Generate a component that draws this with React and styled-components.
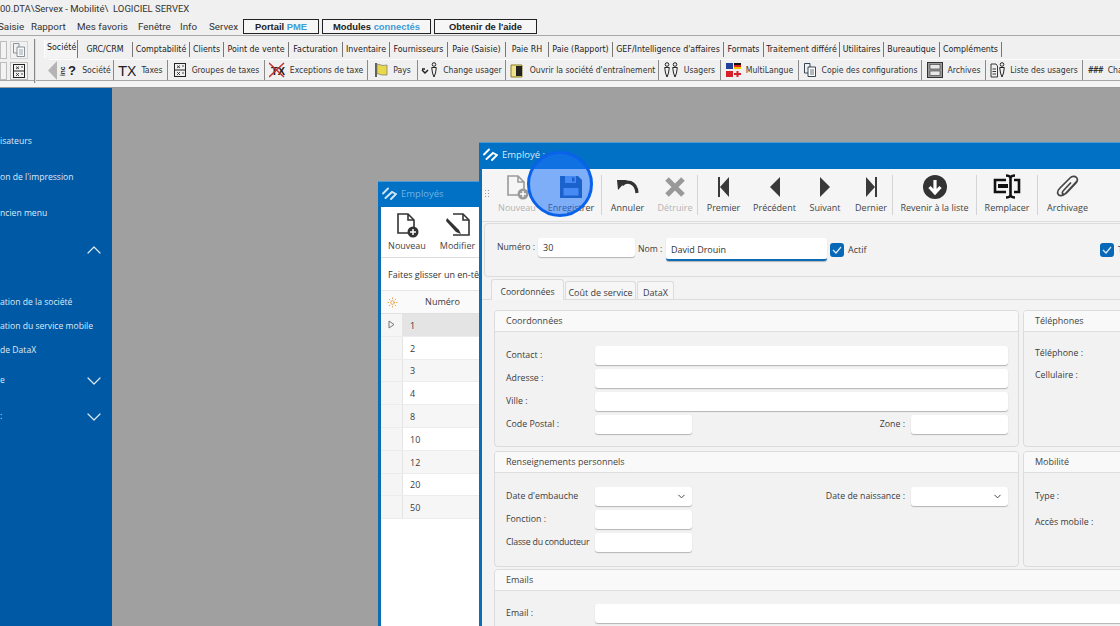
import React from "react";
import styled, { createGlobalStyle } from "styled-components";
import { ChevronUp, ChevronDown, Sun } from "lucide-react";

const GlobalStyle = createGlobalStyle`
  html, body { margin: 0; padding: 0; overflow: hidden; }
  * { box-sizing: border-box; }
`;

const legacy = `"DejaVu Sans Condensed", "Liberation Sans", sans-serif`;
const modern = `"Open Sans", "Noto Sans", sans-serif`;

const Page = styled.div`
  width: 1120px;
  height: 626px;
  overflow: hidden;
  display: flex;
  flex-direction: column;
  background: #f0f0f0;
  font-family: ${legacy};
  color: #222;
`;

const TitleBar = styled.div`
  height: 19px;
  font: 9.5px/18px Roboto, sans-serif;
  color: #333;
  white-space: pre;
`;

const MenuBar = styled.div`
  height: 17px;
  flex: none;
  display: flex;
  align-items: flex-start;
  border-bottom: 1px solid #a8a8a8;
  font: 9.8px/15px Roboto, sans-serif;
  color: #333;
`;

const MenuItem = styled.span`
  flex: none;
  width: ${p => p.$w}px;
  margin-left: ${p => p.$ml || 0}px;
`;

const ModuleButton = styled.div`
  flex: none;
  width: ${p => p.$w}px;
  height: 15px;
  margin-right: 3px;
  border: 1px solid #222;
  background: #f6f6f6;
  text-align: center;
  font: bold 9.4px/13px "Liberation Sans", sans-serif;
  color: #222;
  span { color: #3f9bd6; }
`;

const ToolZone = styled.div`
  height: 52px;
  flex: none;
  display: flex;
  border-bottom: 1px solid #9a9a9a;
  box-shadow: inset 0 -6px 0 #f4f4f4, inset 0 -7px 0 #a6a6a6;
`;

const QuickTools = styled.div`
  width: 36px;
  height: 44px;
  margin-top: 3px;
  flex: none;
  border-right: 2px groove #ddd;
  display: grid;
  grid-template-columns: 7px 18px;
  grid-auto-rows: 18px;
  gap: 3px 3px;
  align-content: start;
  padding-top: 2px;
`;

const QuickButton = styled.div`
  border: 1px solid #bdbdbd;
  background: #f3f3f3;
  display: flex;
  align-items: center;
  justify-content: center;
  opacity: ${p => (p.$faded ? 0.55 : 1)};
`;

const ToolStack = styled.div`
  flex: 1;
  min-width: 0;
  padding: 4px 0 0 8px;
`;

const TabRow = styled.div`
  display: flex;
  height: 19px;
  font-size: 8.8px;
  line-height: 17px;
`;

const Tab = styled.div`
  flex: none;
  width: ${p => p.$w}px;
  text-align: center;
  white-space: nowrap;
  border-right: 1px solid #777;
  height: 15px;
  margin-top: 2px;
  line-height: 14px;
  ${p => p.$active && `
    height: 18px;
    margin-top: 0;
    line-height: 15px;
    background: #f4f4f4;
    border-left: 1px solid #fff;
    text-align: left;
    padding-left: 2px;
  `}
`;

const ActionRow = styled.div`
  display: flex;
  height: 22px;
  margin-left: 4px;
  align-items: stretch;
  border-top: 1px solid #fafafa;
  white-space: nowrap;
  font-size: 8.6px;
`;

const Handle = styled.div`
  flex: none;
  width: 9px;
  height: 19px;
  margin: 1px 0 0 0;
  background: #b4b4b4;
  clip-path: polygon(100% 0, 100% 100%, 0 50%);
`;

const ActionItem = styled.div`
  flex: none;
  width: ${p => p.$w}px;
  height: 20px;
  display: flex;
  align-items: center;
  justify-content: center;
  gap: 5px;
  border-right: 1px solid #8a8a8a;
  color: #333;
`;

const Desk = styled.div`
  flex: 1;
  min-height: 0;
  display: flex;
`;

const Sidebar = styled.nav`
  flex: none;
  width: 112px;
  padding-top: 35px;
  background: #0059a5;
  color: #dfeaf5;
  font: 500 8.6px/1 ${modern};
`;

const SideRow = styled.div`
  height: ${p => p.$h || 36}px;
  display: flex;
  align-items: center;
  justify-content: space-between;
  padding: 1px 6px 0 0;
  white-space: nowrap;
`;

const SideGap = styled.div`
  height: 23px;
`;

const Workspace = styled.main`
  flex: 1;
  position: relative;
  background: #a0a0a0;
`;

const Win = styled.section`
  position: absolute;
  left: ${p => p.$x}px;
  top: ${p => p.$y}px;
  width: ${p => p.$w}px;
  bottom: -4px;
  z-index: ${p => p.$z};
  display: flex;
  flex-direction: column;
  border-left: 3px solid #0c6cb4;
  background: #f3f3f3;
  font-family: ${modern};
  font-size: 9px;
  color: #3c3c3c;
`;

const WinTitle = styled.header`
  flex: none;
  height: ${p => p.$h}px;
  margin-left: -3px;
  padding: 0 0 3px 4px;
  display: flex;
  align-items: center;
  gap: 4px;
  background: #0071c5;
  color: ${p => (p.$dim ? "#6db3e6" : "#d6e9f8")};
  font-size: 9.5px;
  border-top: 1px solid #4f9ad4;
`;

const Bar = styled.div`
  flex: none;
  height: ${p => p.$h}px;
  display: flex;
  align-items: flex-start;
  border-bottom: 1px solid #dcdcdc;
  background: ${p => p.$bg || "#f5f5f5"};
`;

const Grip = styled.div`
  width: 5px;
  height: 10px;
  margin: 20px 4px 0 2px;
  flex: none;
  background-image: radial-gradient(#9a9a9a 1px, transparent 1px);
  background-size: 3px 3px;
`;

const BarBtn = styled.div`
  flex: none;
  width: ${p => p.$w}px;
  height: 100%;
  display: grid;
  grid-template-rows: 26px 13px;
  justify-items: center;
  align-items: center;
  row-gap: 1px;
  padding-top: 5px;
  color: ${p => (p.$off ? "#b4b4b4" : "#444")};
  white-space: nowrap;
  svg { display: block; }
  span { line-height: 13px; }
`;

const BarSep = styled.div`
  flex: none;
  width: 1px;
  height: 40px;
  margin-top: 6px;
  background: #d4d4d4;
`;

const HintRow = styled.div`
  height: 32px;
  flex: none;
  padding-left: 7px;
  line-height: 33px;
  color: #333;
  background: #fff;
  white-space: nowrap;
  overflow: hidden;
`;

const GridHeader = styled.div`
  height: 24px;
  flex: none;
  display: grid;
  grid-template-columns: 22px 1fr;
  align-items: center;
  background: #fafafa;
  border-top: 1px solid #e6e6e6;
  border-bottom: 1px solid #e0e0e0;
  div:last-child { padding: 0 6px 2px 0; text-align: center; }
`;

const GridArea = styled.div`
  flex: 1;
  background: #fff;
`;

const GridRow = styled.div`
  height: 22.8px;
  display: grid;
  grid-template-columns: 22px 1fr;
  align-items: center;
  background: ${p => (p.$selected ? "#e4e4e4" : p.$alt ? "#f6f6f6" : "#fff")};
  border-bottom: 1px solid #ececec;
`;

const RowMark = styled.div`
  height: 100%;
  background: #f5f5f5;
  border-right: 1px solid #e4e4e4;
  display: flex;
  align-items: center;
  justify-content: center;
`;

const RowValue = styled.div`
  padding: 1px 0 0 7px;
`;

const HeadPanel = styled.div`
  flex: none;
  height: 54px;
  margin: 1px 0 0 2px;
  padding: 14px 6px 0 12px;
  display: flex;
  align-items: flex-start;
  border: 1px solid #dcdcdc;
  border-radius: 4px;
`;

const HeadLabel = styled.label`
  flex: none;
  width: ${p => p.$w}px;
  margin-top: ${p => p.$top || 0}px;
  line-height: 18px;
  white-space: nowrap;
  font-size: 8.7px;
`;

const Input = styled.div`
  flex: none;
  height: ${p => p.$h || 19}px;
  width: ${p => (p.$w ? `${p.$w}px` : "auto")};
  margin-right: ${p => p.$mr || 0}px;
  padding: 0 5px;
  line-height: ${p => p.$h || 20}px;
  background: #fff;
  border-radius: 3px;
  box-shadow: 0 1px 1px #b4b4b4;
  color: #333;
  ${p => p.$focus && "border-bottom: 2px solid #0b6cb5;"}
  ${p => p.$wide && "grid-column: 2 / -1;"}
`;

const SelectBox = styled(Input)`
  display: flex;
  align-items: center;
  justify-content: flex-end;
  padding-right: 5px;
`;

const Check = styled.div`
  flex: none;
  width: 14px;
  height: 14px;
  margin: 5px 4px 0 3px;
  border-radius: 3px;
  background: #0868b8;
  display: flex;
  align-items: center;
  justify-content: center;
`;

const CheckLabel = styled.span`
  margin-top: 5px;
  line-height: 14px;
  white-space: nowrap;
`;

const Spacer = styled.div`
  flex: 1;
`;

const FormTabs = styled.div`
  flex: none;
  height: 21px;
  margin-top: 2px;
  padding-left: 9px;
  display: flex;
  align-items: flex-end;
  gap: 1px;
  border-bottom: 1px solid #dcdcdc;
`;

const FormTab = styled.div`
  flex: none;
  width: ${p => p.$w}px;
  height: ${p => (p.$active ? 21 : 18)}px;
  margin-bottom: ${p => (p.$active ? -1 : 0)}px;
  line-height: 16px;
  text-align: center;
  border: 1px solid #dcdcdc;
  border-bottom: none;
  border-radius: 3px 3px 0 0;
  background: #f6f6f6;
  padding-top: ${p => (p.$active ? 4 : 3)}px;
  font-size: ${p => (p.$active ? 8.6 : 9)}px;
`;

const Sections = styled.div`
  flex: none;
  margin: 10px 0 0 12px;
  display: grid;
  grid-template-columns: 525px 130px;
  grid-template-rows: 137px 116px;
  gap: 4px;
`;

const Section = styled.div`
  border: 1px solid #dcdcdc;
  border-radius: 4px;
  background: #f2f2f2;
  overflow: hidden;
  ${p => p.$span && `
    width: 660px;
    margin: 2px 0 0 12px;
    flex: none;
    height: 70px;
  `}
`;

const SectionHead = styled.div`
  height: 21px;
  padding-left: 11px;
  line-height: 19px;
  background: #f9f9f9;
  border-bottom: 1px solid #dedede;
  color: #444;
`;

const FieldGrid = styled.div`
  padding: ${p => p.$top}px 10px 0 11px;
  display: grid;
  grid-template-columns: 89px 97px 1fr 97px;
  grid-auto-rows: 19px;
  row-gap: ${p => p.$gap}px;
  align-items: center;
  font-size: 8.8px;
`;

const SideFields = styled.div`
  padding: ${p => p.$top}px 0 0 11px;
  display: flex;
  flex-direction: column;
  gap: ${p => p.$gap}px;
  line-height: 14px;
  font-size: 8.8px;
`;

const EndLabel = styled.label`
  text-align: right;
  padding: 0 6px 2px 0;
  white-space: nowrap;
`;

const Label = styled.label`
  white-space: nowrap;
  padding-bottom: 2px;
  letter-spacing: ${p => (p.$tight ? -0.25 : 0)}px;
`;

const Spot = styled.div`
  position: absolute;
  left: 415px;
  top: 63px;
  width: 66px;
  height: 66px;
  z-index: 5;
  border-radius: 50%;
  background: rgba(30, 115, 250, 0.55);
  border: 3px solid #0a62ea;
`;

const Logo = ({ dim }) => (
  <svg width="15" height="13" viewBox="0 0 15 13" fill="none" stroke={dim ? "#cfe6f7" : "#fff"} strokeWidth="1.9" strokeLinecap="round">
    <path d="M1 6.5 L6 1.5 M3.5 11 L10 5 L13 6.5 M9 12 L14 7" />
  </svg>
);

const DocPlus = ({ color }) => (
  <svg width="24" height="26" viewBox="0 0 24 26" fill="none">
    <path d="M3 2 H13 L19 8 V21 H3 Z M13 2 V8 H19" stroke={color} strokeWidth="1.6" />
    <circle cx="18" cy="20" r="5.5" fill={color} />
    <path d="M18 17 V23 M15 20 H21" stroke="#fff" strokeWidth="1.5" />
  </svg>
);

const DocEdit = () => (
  <svg width="26" height="26" viewBox="0 0 26 26" fill="none">
    <path d="M8 2 H18 L24 8 V23 H8" stroke="#333" strokeWidth="1.6" />
    <path d="M18 2 V8 H24" stroke="#333" strokeWidth="1.6" />
    <path d="M2 6 L14 18 L16 22 L11 20 L1 9 Z" fill="#333" />
  </svg>
);

const Floppy = () => (
  <svg width="24" height="24" viewBox="0 0 24 24">
    <path d="M1 1 H19 L23 5 V23 H1 Z" fill="#1c4f98" />
    <path d="M6 1 H17 V8 H6 Z" fill="#7aa6ec" />
    <path d="M13 2.5 H15.5 V6.5 H13 Z" fill="#1c4f98" />
    <path d="M4.5 13 H19.5 V20.5 H4.5 Z" fill="#7aa6ec" />
  </svg>
);

const Undo = () => (
  <svg width="24" height="24" viewBox="0 0 24 24" fill="none">
    <path d="M6 10 C10 5 20 6 21 18" stroke="#333" strokeWidth="3.2" />
    <path d="M1 5 L11 5 L2 15 Z" fill="#333" />
  </svg>
);

const Cross = () => (
  <svg width="24" height="24" viewBox="0 0 24 24" stroke="#999" strokeWidth="5">
    <path d="M4 4 L20 20 M20 4 L4 20" />
  </svg>
);

const Nav = ({ d, bar }) => (
  <svg width="24" height="24" viewBox="0 0 24 24" fill="#3a3a3a">
    <path d={d} />
    {bar && <rect x={bar} y="2" width="2" height="20" />}
  </svg>
);

const BackArrow = () => (
  <svg width="24" height="24" viewBox="0 0 24 24">
    <circle cx="12" cy="12" r="12" fill="#333" />
    <path d="M12 5 V17 M6.5 12 L12 18 L17.5 12" fill="none" stroke="#fff" strokeWidth="3.2" />
  </svg>
);

const Replace = () => (
  <svg width="28" height="26" viewBox="0 0 28 26" fill="none" stroke="#111">
    <path d="M13 6 H2 V18 H13" strokeWidth="2.6" />
    <path d="M21 6 H26 V18 H21" strokeWidth="2.6" />
    <rect x="5" y="10" width="10" height="4" fill="#111" stroke="none" />
    <path d="M13 1.5 C16 1.5 17 2.5 17.5 3.5 C18 2.5 19 1.5 22 1.5 M17.5 3 V21 M13 23.5 C16 23.5 17 22.5 17.5 21.5 C18 22.5 19 23.5 22 23.5" strokeWidth="2.6" />
  </svg>
);

const Clip = () => (
  <svg width="24" height="24" viewBox="0 0 24 24" fill="none" stroke="#444" strokeWidth="1.7">
    <path d="M21 6 L9.5 18.5 C7 21 3 21.5 2 19 C1 17 2.5 14.5 4 13 L14 3 C16 1 19 1 20.5 2.5 C22 4 21.5 6.5 20 8 L10.5 18 C9 19.5 7 19.5 6.5 18.5 C6 17.5 6.5 16.5 7.5 15.5 L15 7.5" />
  </svg>
);

const Small = ({ w = 16, children }) => (
  <svg width={w} height="16" viewBox={`0 0 ${w} 16`} fill="none" stroke="#222">{children}</svg>
);

const IconInc = () => (
  <Small w={18}>
    <text x="6" y="14" transform="rotate(-90 6 14)" fontSize="6.5" fill="#222" stroke="none" fontFamily="Liberation Sans" fontWeight="700">inc</text>
    <text x="9" y="13" fontSize="13" fill="#222" stroke="none" fontFamily="Liberation Sans" fontWeight="700">?</text>
  </Small>
);

const IconTx = () => (
  <Small w={18}>
    <text x="0" y="14" fontSize="15" fill="#222" stroke="none" fontFamily="Liberation Sans">T</text>
    <text x="9" y="14" fontSize="14" fill="#222" stroke="none" fontFamily="Liberation Sans">X</text>
  </Small>
);

const IconGroup = () => (
  <Small w={14}>
    <rect x="1.5" y="1.5" width="11" height="13" />
    <path d="M1.5 8 H12.5" />
    <path d="M4 3.5 L7 6 M7 3.5 L4 6 M4 10 L7 13 M7 10 L4 13 M9 4 H11 M9 11 H11" strokeWidth="0.8" />
  </Small>
);

const IconNoTax = () => (
  <Small w={16}>
    <text x="2" y="13" fontSize="11" fontWeight="700" fill="#222" stroke="none" fontFamily="Liberation Sans">TX</text>
    <path d="M0 1 L15 15 M15 1 L0 15" stroke="#c4302b" strokeWidth="1.5" />
  </Small>
);

const IconFlag = () => (
  <Small w={14}>
    <path d="M2 1 V15" stroke="#222" strokeWidth="1.4" />
    <path d="M3 2 L9 3.5 L13 3 V13 L8 13 L3 11.5 Z" fill="#e8d84a" stroke="#777" strokeWidth="0.7" />
  </Small>
);

const Person = ({ x = 0 }) => (
  <g transform={`translate(${x} 0)`}>
    <circle cx="3" cy="2.5" r="1.8" strokeWidth="1" />
    <path d="M0.7 5.5 H5.3 L4.5 11 L3 15 L1.5 11 Z" strokeWidth="1" />
  </g>
);

const IconSwap = () => (
  <Small w={17}>
    <path d="M1 8 L4 11 L7 8 M1 7 H4" strokeWidth="1.5" />
    <Person x={10} />
  </Small>
);

const IconBook = () => (
  <Small w={16}>
    <path d="M2 3 H13 V15 H2 Z" fill="#efe28a" stroke="#8a7d22" />
    <rect x="7" y="4" width="6" height="10" fill="#222" stroke="none" />
  </Small>
);

const IconUsers = () => (
  <Small w={15}>
    <Person x={0} />
    <Person x={8} />
  </Small>
);

const IconFlags = () => (
  <Small w={15}>
    <rect x="0" y="1" width="7" height="6" fill="#21409a" stroke="none" />
    <rect x="8" y="1" width="7" height="2" fill="#111" stroke="none" />
    <rect x="8" y="3" width="7" height="2" fill="#d22" stroke="none" />
    <rect x="8" y="5" width="7" height="2" fill="#f2c500" stroke="none" />
    <rect x="0" y="9" width="7" height="6" fill="#d6202a" stroke="none" />
    <path d="M8 12 H15 M11.5 9 V15" stroke="#d6202a" strokeWidth="2" />
  </Small>
);

const IconCopy = () => (
  <Small w={14}>
    <path d="M1.5 1.5 H7 V11 H1.5 Z" strokeWidth="0.9" stroke="#234" />
    <path d="M5 5 H12.5 V14.5 H5 Z" fill="#fff" stroke="#234" strokeWidth="0.9" />
    <path d="M7 8 H11 M7 10 H11 M7 12 H11" strokeWidth="0.7" stroke="#234" />
  </Small>
);

const IconBox = () => (
  <Small w={16}>
    <rect x="0.5" y="0.5" width="15" height="15" fill="#9b9b9b" stroke="#333" />
    <rect x="3" y="2.5" width="10" height="4.5" fill="#e8e8e8" stroke="#333" strokeWidth="0.6" />
    <rect x="3" y="9" width="10" height="4.5" fill="#e8e8e8" stroke="#333" strokeWidth="0.6" />
  </Small>
);

const IconList = () => (
  <Small w={15}>
    <path d="M1 2 H6 L7.5 4 V15 H1 Z M2.5 7 H6 M2.5 9.5 H6 M2.5 12 H6" strokeWidth="0.9" />
    <Person x={9} />
  </Small>
);

const Hash = styled.span`
  font-weight: 700;
  font-style: italic;
  font-size: 8px;
`;

const Tick = () => (
  <svg width="10" height="8" viewBox="0 0 10 8" fill="none" stroke="#dcecf8" strokeWidth="1.2">
    <path d="M1 4 L4 7 L9 1" />
  </svg>
);

const tabs = [
  ["GRC/CRM", 55], ["Comptabilité", 57], ["Clients", 34], ["Point de vente", 65], ["Facturation", 54],
  ["Inventaire", 47], ["Fournisseurs", 58], ["Paie (Saisie)", 58], ["Paie RH", 43], ["Paie (Rapport)", 64],
  ["GEF/Intelligence d'affaires", 111], ["Formats", 40], ["Traitement différé", 76], ["Utilitaires", 44],
  ["Bureautique", 56], ["Compléments", 62],
];

const actions = [
  [<IconInc key="i" />, "Société", 57],
  [<IconTx key="i" />, "Taxes", 54],
  [<IconGroup key="i" />, "Groupes de taxes", 97],
  [<IconNoTax key="i" />, "Exceptions de taxe", 103],
  [<IconFlag key="i" />, "Pays", 50],
  [<IconSwap key="i" />, "Change usager", 88],
  [<IconBook key="i" />, "Ouvrir la société d'entraînement", 153],
  [<IconUsers key="i" />, "Usagers", 62],
  [<IconFlags key="i" />, "MultiLangue", 78],
  [<IconCopy key="i" />, "Copie des configurations", 123],
  [<IconBox key="i" />, "Archives", 64],
  [<IconList key="i" />, "Liste des usagers", 97],
];

const rows = ["1", "2", "3", "4", "8", "10", "12", "20", "50"];

export default function App() {
  return (
    <Page>
      <GlobalStyle />
      <TitleBar>00.DTA\Servex - Mobilité\  LOGICIEL SERVEX</TitleBar>
      <MenuBar>
        <MenuItem $w={33} $ml={-2}>Saisie</MenuItem>
        <MenuItem $w={46}>Rapport</MenuItem>
        <MenuItem $w={61}>Mes favoris</MenuItem>
        <MenuItem $w={42}>Fenêtre</MenuItem>
        <MenuItem $w={29}>Info</MenuItem>
        <MenuItem $w={34}>Servex</MenuItem>
        <ModuleButton $w={76}>Portail <span>PME</span></ModuleButton>
        <ModuleButton $w={109}>Modules <span>connectés</span></ModuleButton>
        <ModuleButton $w={103}>Obtenir de l'aide</ModuleButton>
      </MenuBar>
      <ToolZone>
        <QuickTools>
          <QuickButton />
          <QuickButton $faded><IconCopy /></QuickButton>
          <QuickButton />
          <QuickButton><IconGroup /></QuickButton>
        </QuickTools>
        <ToolStack>
          <TabRow>
            <Tab $w={34} $active>Société</Tab>
            {tabs.map(([name, w]) => <Tab key={name} $w={w}>{name}</Tab>)}
          </TabRow>
          <ActionRow>
            <Handle />
            {actions.map(([icon, name, w]) => (
              <ActionItem key={name} $w={w}>{icon}{name}</ActionItem>
            ))}
            <ActionItem $w={60}><Hash>###</Hash>Change</ActionItem>
          </ActionRow>
        </ToolStack>
      </ToolZone>
      <Desk>
        <Sidebar>
          <SideRow>isateurs</SideRow>
          <SideRow>on de l'impression</SideRow>
          <SideRow>ncien menu</SideRow>
          <SideRow><span /><ChevronUp size={24} strokeWidth={1.2} /></SideRow>
          <SideGap />
          <SideRow $h={24}>ation de la société</SideRow>
          <SideRow $h={24}>ation du service mobile</SideRow>
          <SideRow $h={24}>de DataX</SideRow>
          <SideRow>e<ChevronDown size={24} strokeWidth={1.2} /></SideRow>
          <SideRow>:<ChevronDown size={24} strokeWidth={1.2} /></SideRow>
        </Sidebar>
        <Workspace>
          <Win $x={266} $y={93} $w={110} $z={1}>
            <WinTitle $h={26} $dim><Logo dim />Employés</WinTitle>
            <Bar $h={51} $bg="#fff">
              <BarBtn $w={52}><DocPlus color="#333" /><span>Nouveau</span></BarBtn>
              <BarBtn $w={49}><DocEdit /><span>Modifier</span></BarBtn>
            </Bar>
            <HintRow>Faites glisser un en-tête</HintRow>
            <GridHeader>
              <div><Sun size={11} color="#e2a24a" style={{ display: "block", margin: "0 auto" }} /></div>
              <div>Numéro</div>
            </GridHeader>
            <GridArea>
              {rows.map((value, i) => (
                <GridRow key={value} $selected={i === 0} $alt={i % 2 === 0}>
                  <RowMark>
                    {i === 0 && (
                      <svg width="7" height="9" viewBox="0 0 7 9" fill="none" stroke="#777"><path d="M1 1 L6 4.5 L1 8 Z" /></svg>
                    )}
                  </RowMark>
                  <RowValue>{value}</RowValue>
                </GridRow>
              ))}
            </GridArea>
          </Win>
          <Win $x={367} $y={54} $w={651} $z={2}>
            <WinTitle $h={27}><Logo />Employé :</WinTitle>
            <Bar $h={53}>
              <Grip />
              <BarBtn $w={48} $off><DocPlus color="#9a9a9a" /><span>Nouveau</span></BarBtn>
              <BarBtn $w={60}><Floppy /><span>Enregistrer</span></BarBtn>
              <BarSep />
              <BarBtn $w={51}><Undo /><span>Annuler</span></BarBtn>
              <BarBtn $w={44} $off><Cross /><span>Détruire</span></BarBtn>
              <BarSep />
              <BarBtn $w={51}><Nav d="M17 2 V22 L8 12 Z" bar="6" /><span>Premier</span></BarBtn>
              <BarBtn $w={51}><Nav d="M17 2 V22 L7 12 Z" /><span>Précédent</span></BarBtn>
              <BarBtn $w={50}><Nav d="M7 2 V22 L17 12 Z" /><span>Suivant</span></BarBtn>
              <BarBtn $w={42}><Nav d="M7 2 V22 L16 12 Z" bar="16" /><span>Dernier</span></BarBtn>
              <BarSep />
              <BarBtn $w={83}><BackArrow /><span>Revenir à la liste</span></BarBtn>
              <BarSep />
              <BarBtn $w={60}><Replace /><span>Remplacer</span></BarBtn>
              <BarSep />
              <BarBtn $w={59}><Clip /><span>Archivage</span></BarBtn>
            </Bar>
            <HeadPanel>
              <HeadLabel $w={41}>Numéro :</HeadLabel>
              <Input $w={97} $mr={3}>30</Input>
              <HeadLabel $w={28} $top={2}>Nom :</HeadLabel>
              <Input $w={161} $h={23} $focus>David Drouin</Input>
              <Check><Tick /></Check>
              <CheckLabel>Actif</CheckLabel>
              <Spacer />
              <Check><Tick /></Check>
              <CheckLabel>T</CheckLabel>
            </HeadPanel>
            <FormTabs>
              <FormTab $w={73} $active>Coordonnées</FormTab>
              <FormTab $w={71}>Coût de service</FormTab>
              <FormTab $w={37}>DataX</FormTab>
            </FormTabs>
            <Sections>
              <Section>
                <SectionHead>Coordonnées</SectionHead>
                <FieldGrid $top={14} $gap={4}>
                  <Label>Contact :</Label><Input $wide />
                  <Label>Adresse :</Label><Input $wide />
                  <Label>Ville :</Label><Input $wide />
                  <Label>Code Postal :</Label><Input />
                  <EndLabel>Zone :</EndLabel><Input />
                </FieldGrid>
              </Section>
              <Section>
                <SectionHead>Téléphones</SectionHead>
                <SideFields $top={14} $gap={6}>
                  <Label>Téléphone :</Label>
                  <Label>Cellulaire :</Label>
                </SideFields>
              </Section>
              <Section>
                <SectionHead>Renseignements personnels</SectionHead>
                <FieldGrid $top={14} $gap={4}>
                  <Label>Date d'embauche</Label>
                  <SelectBox><ChevronDown size={11} /></SelectBox>
                  <EndLabel>Date de naissance :</EndLabel>
                  <SelectBox><ChevronDown size={11} /></SelectBox>
                  <Label>Fonction :</Label><Input />
                  <span /><span />
                  <Label $tight>Classe du conducteur</Label><Input />
                </FieldGrid>
              </Section>
              <Section>
                <SectionHead>Mobilité</SectionHead>
                <SideFields $top={16} $gap={10}>
                  <Label>Type :</Label>
                  <Label>Accès mobile :</Label>
                </SideFields>
              </Section>
            </Sections>
            <Section $span>
              <SectionHead>Emails</SectionHead>
              <FieldGrid $top={13} $gap={4}>
                <Label>Email :</Label><Input $wide />
              </FieldGrid>
            </Section>
          </Win>
          <Spot />
        </Workspace>
      </Desk>
    </Page>
  );
}
